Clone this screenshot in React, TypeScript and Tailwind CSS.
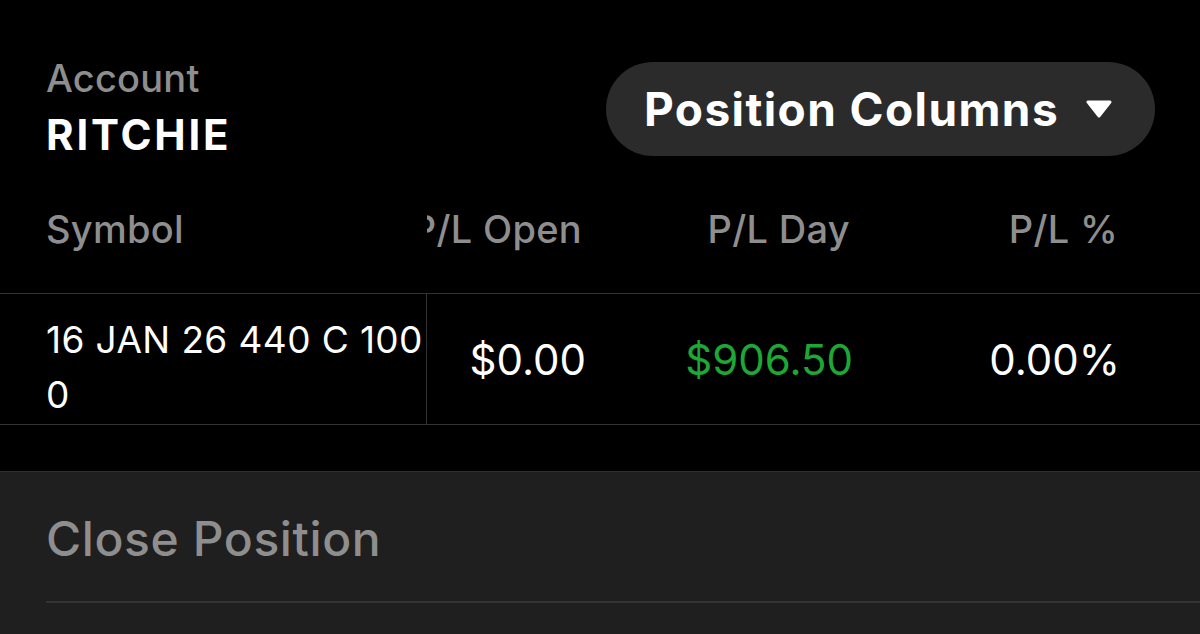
import React from 'react';

export default function App() {
  return (
    <div className="w-[1200px] h-[634px] bg-black overflow-hidden flex flex-col font-['Inter',sans-serif]">
      {/* account + column picker */}
      <div className="flex items-start justify-between pl-[46px] pr-[45px] pt-[62px]">
        <div className="flex flex-col -mt-[8px]">
          <span className="text-[38px] leading-[48px] font-medium text-[#8e8e8e] tracking-[0.2px]">Account</span>
          <span className="text-[42px] leading-[42px] mt-[12px] font-bold text-white tracking-[2.8px]">RITCHIE</span>
        </div>
        <button className="h-[94px] w-[549px] rounded-full bg-[#2b2b2b] flex items-center pl-[38px] gap-[27px]">
          <span className="text-[46px] font-bold text-white tracking-[1.4px]">Position Columns</span>
          <svg width="26" height="18" viewBox="0 0 26 18">
            <path d="M2 2 H24 L13 16 Z" fill="#fff" stroke="#fff" strokeWidth="3" strokeLinejoin="round" />
          </svg>
        </button>
      </div>

      {/* column headers */}
      <div className="grid grid-cols-[427px_175px_268px_268px_1fr] h-[138px] items-center pt-[10px] text-[38px] font-medium tracking-[0.3px] text-[#8e8e8e] border-b border-[#333]">
        <div className="pl-[46px]">Symbol</div>
        <div className="flex justify-end overflow-hidden pr-[20px] whitespace-nowrap">P/L Open</div>
        <div className="flex justify-end pr-[20px]">P/L Day</div>
        <div className="flex justify-end pr-[20px]">P/L %</div>
        <div />
      </div>

      {/* position row */}
      <div className="grid grid-cols-[427px_175px_268px_268px_1fr] h-[131px] border-b border-[#333]">
        <div className="pl-[46px] pt-[18px] text-[37px] leading-[55px] tracking-[0.4px] text-white border-r border-[#333] whitespace-nowrap">
          16 JAN 26 440 C 100
          <br />0
        </div>
        <div className="flex items-center justify-end pr-[16px] text-[42px] text-white">$0.00</div>
        <div className="flex items-center justify-end pr-[17px] text-[42px] text-[#1ca834]">$906.50</div>
        <div className="flex items-center justify-end pr-[18px] text-[42px] text-white">0.00%</div>
        <div />
      </div>

      <div className="h-[46px]" />

      {/* actions sheet */}
      <div className="flex-1 bg-[#1f1f1f] border-t border-[#2e2e2e]">
        <div className="ml-[46px] h-[131px] flex items-center pt-[4px] border-b-2 border-[#333]">
          <span className="text-[48px] font-medium text-[#8e8e8e] tracking-[0.6px]">Close Position</span>
        </div>
      </div>
    </div>
  );
}
